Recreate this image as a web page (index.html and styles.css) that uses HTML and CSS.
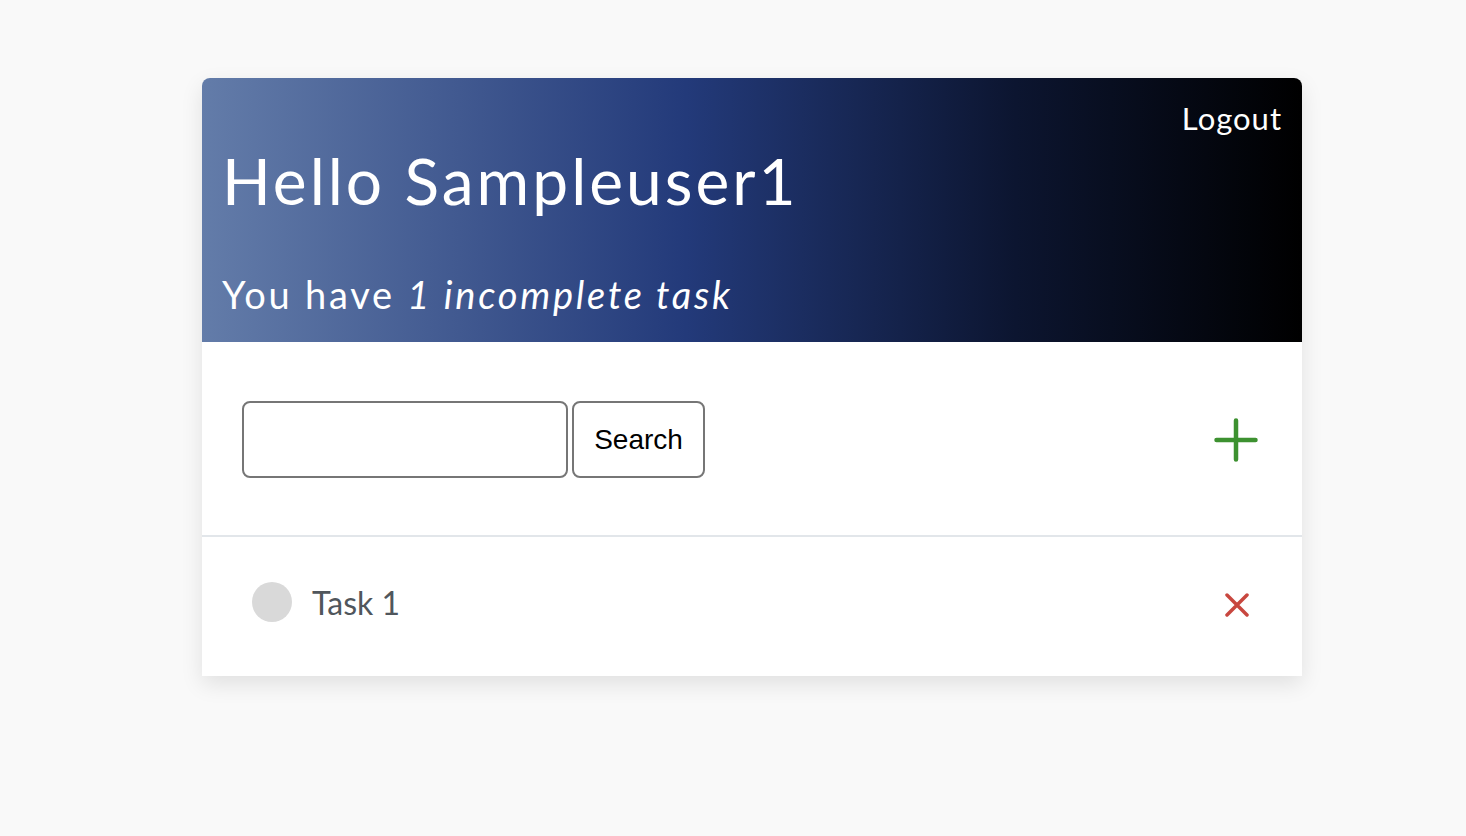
FILE: index.html
```html
<!DOCTYPE html>
<html lang="en">
<head>
<meta charset="utf-8">
<title>Todo</title>
<link rel="stylesheet" href="styles.css">
</head>
<body>
<main class="card">
  <header class="hero">
    <div class="hero-top"><a class="logout" href="#">Logout</a></div>
    <h1 class="hello">Hello Sampleuser1</h1>
    <p class="summary">You have <em>1 incomplete task</em></p>
  </header>
  <section class="toolbar">
    <form class="search">
      <input class="search-input" type="text" aria-label="Search tasks">
      <button class="search-btn" type="button">Search</button>
    </form>
    <button class="add-btn" type="button" aria-label="Add task">
      <svg width="44" height="44" viewBox="0 0 44 44"><path d="M22 2.5v39M2.5 22h39" stroke="#3d9130" stroke-width="4.5" stroke-linecap="round" fill="none"/></svg>
    </button>
  </section>
  <ul class="tasks">
    <li class="task">
      <span class="check"></span>
      <span class="task-name">Task 1</span>
      <button class="del-btn" type="button" aria-label="Delete task">
        <svg width="24" height="24" viewBox="0 0 24 24"><path d="M2 2l20 20M22 2L2 22" stroke="#c8473f" stroke-width="3.5" stroke-linecap="round" fill="none"/></svg>
      </button>
    </li>
  </ul>
</main>
</body>
</html>
```
FILE: styles.css
```css
* { box-sizing: border-box; }
html, body {
  min-height: 100%;
}
body {
  margin: 0;
  min-height: 100vh;
  padding: 78px 0 80px 0;
  background: #f9f9f9;
  font-family: Lato, "Noto Sans", sans-serif;
}
.card {
  width: 1100px;
  margin: 0 0 0 202px;
  background: #fff;
  border-radius: 8px 8px 0 0;
  box-shadow: 0 8px 22px rgba(0, 0, 0, 0.1);
}
.hero {
  height: 264px;
  padding: 20px 20px 0 20px;
  border-radius: 8px 8px 0 0;
  color: #fff;
  background: linear-gradient(90deg, #637ca9 0%, #233a7a 44%, #0c1530 74%, #000 100%);
  display: flex;
  flex-direction: column;
}
.hero-top {
  display: flex;
  justify-content: flex-end;
  height: 40px;
}
.logout {
  color: #fff;
  text-decoration: none;
  font-size: 31px;
  line-height: 40px;
  letter-spacing: 1px;
}
.hello {
  margin: 5px 0 0 0;
  font-weight: 400;
  font-size: 64px;
  line-height: 76px;
  letter-spacing: 3px;
}
.summary {
  margin: 52px 0 0 0;
  font-size: 38px;
  line-height: 46px;
  letter-spacing: 2.75px;
}
.summary em { font-style: italic; }
.toolbar {
  display: flex;
  align-items: center;
  justify-content: space-between;
  padding: 59px 44px 57px 40px;
  border-bottom: 2px solid #e2e6ea;
}
.search {
  display: flex;
  gap: 4px;
}
.search-input {
  width: 326px;
  height: 77px;
  border: 2px solid #767676;
  border-radius: 8px;
  background: #fff;
}
.search-btn {
  height: 77px;
  width: 133px;
  border: 2px solid #767676;
  border-radius: 8px;
  background: #fff;
  color: #000;
  font-family: "Liberation Sans", Arial, sans-serif;
  font-size: 28px;
}
.add-btn {
  border: 0;
  background: none;
  padding: 0;
  width: 44px;
  height: 44px;
  display: flex;
}
.tasks {
  list-style: none;
  margin: 0;
  padding: 0;
}
.task {
  display: flex;
  align-items: center;
  height: 139px;
  padding: 0 53px 9px 50px;
}
.check {
  width: 40px;
  height: 40px;
  border-radius: 50%;
  background: #d9d9d9;
}
.task-name {
  margin-left: 20px;
  flex: 1;
  font-size: 32px;
  color: #50565c;
}
.del-btn {
  border: 0;
  background: none;
  padding: 0;
  width: 24px;
  height: 24px;
  margin-top: 5px;
  display: flex;
}
```
